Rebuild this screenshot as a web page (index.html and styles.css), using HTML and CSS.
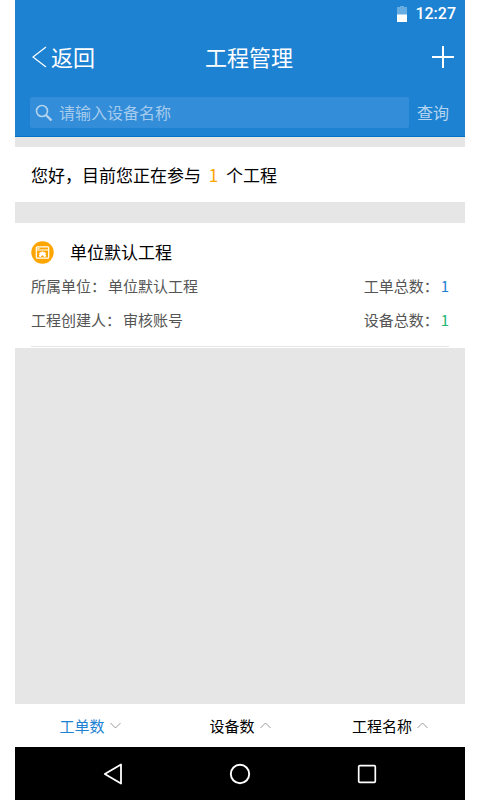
FILE: index.html
```html
<!DOCTYPE html>
<html lang="zh-CN">
<head>
<meta charset="utf-8">
<meta name="viewport" content="width=device-width, initial-scale=1">
<title>工程管理</title>
<link rel="stylesheet" href="styles.css">
</head>
<body>
<div class="app">
  <header class="header">
    <div class="status">
      <svg class="battery" width="10" height="16" viewBox="0 0 10 16" aria-hidden="true">
        <path d="M3 0h4v1h3v8H0V1h3z" fill="#67ade2"/>
        <path d="M0 8.500h10V16H0z" fill="#fff"/>
      </svg>
      <span>12:27</span>
    </div>
    <div class="titlebar">
      <button class="back" type="button">
        <svg width="15" height="22" viewBox="0 0 15 22" aria-hidden="true"><path d="M14 1L1 11l13 10" fill="none" stroke="#fff" stroke-width="1.200"/></svg>
        <span class="bar-text">返回</span>
      </button>
      <h1 class="title bar-text">工程管理</h1>
      <button class="add" type="button" aria-label="新增">
        <svg width="22" height="22" viewBox="0 0 22 22" aria-hidden="true"><path d="M11 0v22M0 11h22" stroke="#fff" stroke-width="2"/></svg>
      </button>
    </div>
    <form class="search">
      <label class="field">
        <svg width="18" height="18" viewBox="0 0 18 18" aria-hidden="true"><circle cx="7" cy="7" r="5.500" fill="none" stroke="#b4d4f0" stroke-width="1.600"/><path d="M11 11l5.500 5.500" stroke="#b4d4f0" stroke-width="2.400"/></svg>
        <input class="bar-text" type="text" placeholder="请输入设备名称" aria-label="请输入设备名称">
      </label>
      <button class="query bar-text" type="button">查询</button>
    </form>
  </header>

  <main class="main">
    <p class="greeting">您好，目前您正在参与 <span class="orange">1</span> 个工程</p>
    <article class="card">
      <div class="card-body">
        <div class="card-head">
          <svg width="23" height="23" viewBox="0 0 23 23" aria-hidden="true">
            <circle cx="11.500" cy="11.500" r="11.200" fill="#ffa500"/>
            <rect x="5.300" y="5.800" width="12.400" height="11.400" rx="1" fill="none" stroke="#fff" stroke-width="1.200"/>
            <path d="M5.300 9h12.400M6.500 7.300h2" stroke="#fff" stroke-width="1"/>
            <path d="M10.500 10.500h2v1l1.300-.5 1.200 1.400-.8 1.100 1 .8-.7 1.600H13c0-2-3-2-3 0H8.500l-.7-1.600 1-.8-.8-1.100 1.200-1.400 1.300.5z" fill="#fff"/>
          </svg>
          <h2 class="card-title">单位默认工程</h2>
        </div>
        <div class="row">
          <p class="pair"><span>所属单位：</span><span>单位默认工程</span></p>
          <p class="pair"><span>工单总数：</span><span class="blue">1</span></p>
        </div>
        <div class="row">
          <p class="pair"><span>工程创建人：</span><span>审核账号</span></p>
          <p class="pair"><span>设备总数：</span><span class="green">1</span></p>
        </div>
      </div>
    </article>
  </main>

  <div class="sort">
    <button class="sort-item active" type="button">工单数
      <svg width="11" height="7" viewBox="0 0 11 7" aria-hidden="true"><path d="M.5 1l5 5 5-5" fill="none" stroke="#999"/></svg>
    </button>
    <button class="sort-item" type="button">设备数
      <svg width="11" height="7" viewBox="0 0 11 7" aria-hidden="true"><path d="M.5 6l5-5 5 5" fill="none" stroke="#999"/></svg>
    </button>
    <button class="sort-item" type="button">工程名称
      <svg width="11" height="7" viewBox="0 0 11 7" aria-hidden="true"><path d="M.5 6l5-5 5 5" fill="none" stroke="#999"/></svg>
    </button>
  </div>

  <nav class="system">
    <button type="button" aria-label="后退">
      <svg width="22" height="22" viewBox="0 0 22 22" aria-hidden="true"><path d="M19 1.500v19L2.800 11z" fill="none" stroke="#fff" stroke-width="1.800" stroke-linejoin="round"/></svg>
    </button>
    <button type="button" aria-label="主屏幕">
      <svg width="22" height="22" viewBox="0 0 22 22" aria-hidden="true"><circle cx="11" cy="11" r="9.200" fill="none" stroke="#fff" stroke-width="1.900"/></svg>
    </button>
    <button type="button" aria-label="最近任务">
      <svg width="22" height="22" viewBox="0 0 22 22" aria-hidden="true"><rect x="2.700" y="2.700" width="16.600" height="16.600" rx="1" fill="none" stroke="#fff" stroke-width="1.700"/></svg>
    </button>
  </nav>
</div>
</body>
</html>
```
FILE: styles.css
```css
* {
  box-sizing: border-box;
}

body {
  margin: 0;
  padding: 0 15px;
  background: #fff;
  color: #000;
  font-family: "Noto Sans CJK SC", sans-serif;
}

h1, h2, p {
  margin: 0;
  font-weight: 400;
}

button {
  padding: 0;
  border: 0;
  background: none;
  color: inherit;
  font: inherit;
}

svg {
  display: block;
  flex: none;
}

.app {
  display: flex;
  flex-direction: column;
  min-height: 100vh;
  background: #e6e6e6;
}

.header {
  padding-bottom: 8px;
  background: #1e82d2;
  border-bottom: 1px solid #0870c8;
  color: #fff;
}

.status {
  display: flex;
  align-items: center;
  justify-content: flex-end;
  gap: 8px;
  height: 28px;
  padding-right: 9px;
  font: 500 16px/28px Roboto, sans-serif;
}

.titlebar {
  display: grid;
  grid-template-columns: 1fr auto 1fr;
  align-items: center;
  height: 58px;
  padding: 0 11px 0 17px;
  font-size: 22px;
  line-height: 32px;
}

.back {
  display: flex;
  align-items: center;
  gap: 4px;
  justify-self: start;
}

.title {
  padding-left: 12px;
  font-size: 22px;
}

.add {
  justify-self: end;
}

.search {
  display: flex;
  align-items: center;
  gap: 8px;
  padding: 11px 16px 0 15px;
  font-size: 16px;
  line-height: 24px;
  color: #b4d4f0;
}

.field {
  display: flex;
  flex: 1;
  align-items: center;
  gap: 6px;
  height: 31px;
  padding: 0 5px;
  border-radius: 2px;
  background: #338dd9;
}

.field input {
  flex: 1;
  min-width: 0;
  padding: 0 0 2px;
  border: 0;
  outline: 0;
  background: none;
  color: #fff;
  font: inherit;
}

.field input::placeholder {
  color: #a5cbed;
  opacity: 1;
}

.bar-text {
  padding-bottom: 2px;
}

.main {
  flex: 1;
  padding-top: 10px;
}

.greeting {
  padding: 14px 16px;
  background: #fff;
  font-size: 17px;
  line-height: 27px;
}

.orange {
  margin: 0 4px;
  color: #ffa500;
}

.card {
  margin-top: 21px;
  padding: 12px 16px 1px;
  background: #fff;
}

.card-body {
  padding-bottom: 9px;
  border-bottom: 1px solid #e6e6e6;
}

.card-head {
  display: flex;
  align-items: center;
  gap: 16px;
  height: 34px;
}

.card-title {
  font-size: 17px;
  line-height: 34px;
}

.row {
  display: flex;
  justify-content: space-between;
  color: #555;
  font-size: 15px;
  line-height: 34px;
}

.pair {
  display: flex;
  gap: 2px;
}

.blue {
  color: #1e82d2;
}

.green {
  color: #22b573;
}

.sort {
  display: grid;
  grid-template-columns: repeat(3, 1fr);
  height: 43px;
  background: #fff;
}

.sort-item {
  display: flex;
  align-items: center;
  justify-content: center;
  gap: 5px;
  font-size: 15px;
}

.active {
  color: #1e82d2;
}

.system {
  display: flex;
  align-items: center;
  justify-content: center;
  gap: 105px;
  height: 53px;
  background: #000;
}
```
